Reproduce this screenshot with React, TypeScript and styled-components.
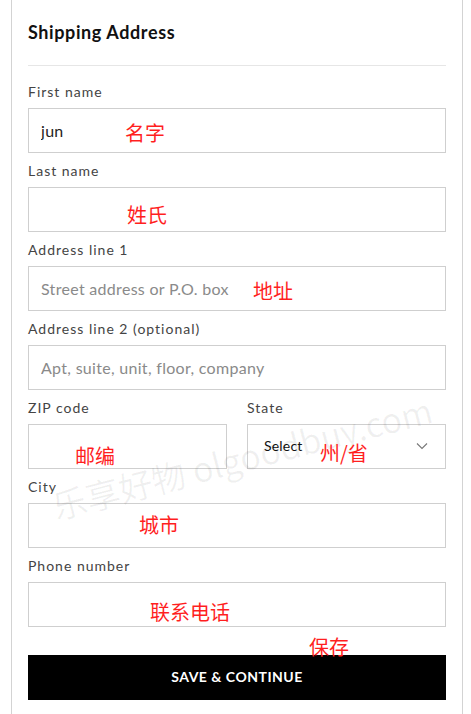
import * as React from 'react';
import styled, { createGlobalStyle } from 'styled-components';

const GlobalStyle = createGlobalStyle`
  html, body {
    margin: 0;
    padding: 0;
    background: #fff;
  }
  body {
    font-family: Lato, "Open Sans", "Noto Sans CJK SC", sans-serif;
    color: #222;
  }
`;

const Panel = styled.div`
  position: relative;
  width: 452px;
  margin-left: 11px;
  min-height: 714px;
  box-sizing: border-box;
  border-left: 1px solid #d3d3d3;
  border-right: 1px solid #d3d3d3;
  padding: 0 16px;
`;

const Header = styled.div`
  padding: 20px 0 21px;
  border-bottom: 1px solid #e6e6e6;
  font-size: 18px;
  line-height: 24px;
  font-weight: 700;
  letter-spacing: 0.6px;
  color: #111;
`;

const Form = styled.form`
  display: flex;
  flex-direction: column;
  padding-top: 18px;
`;

const Row = styled.div`
  display: grid;
  grid-template-columns: 1fr 1fr;
  column-gap: 20px;
`;

const Field = styled.div`
  display: flex;
  flex-direction: column;
  margin-bottom: 10px;
`;

const Label = styled.label`
  font-size: 14px;
  line-height: 16px;
  letter-spacing: 1px;
  color: #444;
  margin-bottom: 8px;
`;

const Input = styled.input`
  box-sizing: border-box;
  height: 45px;
  width: 100%;
  border: 1px solid #cfcfcf;
  padding: 0 12px;
  font-family: Lato, "Open Sans", sans-serif;
  font-size: 16px;
  letter-spacing: 0.3px;
  color: #222;
  outline: none;
  &::placeholder {
    color: #8a8a8a;
  }
`;

const SelectBox = styled.div`
  box-sizing: border-box;
  height: 45px;
  border: 1px solid #cfcfcf;
  display: flex;
  align-items: center;
  justify-content: space-between;
  padding: 0 17px 2px 16px;
  font-size: 14px;
  letter-spacing: 0.2px;
  color: #111;
`;

const SaveButton = styled.button`
  margin-top: 18px;
  height: 45px;
  padding: 0 0 3px;
  border: none;
  background: #000;
  color: #fff;
  font-family: Lato, "Open Sans", sans-serif;
  font-size: 14px;
  font-weight: 700;
  letter-spacing: 0.5px;
  cursor: pointer;
`;

const Note = styled.span<{ $x: number; $y: number }>`
  position: absolute;
  left: ${p => p.$x - 12}px;
  top: ${p => p.$y}px;
  font-family: "Noto Sans CJK SC", sans-serif;
  font-size: 20px;
  line-height: 20px;
  color: #ff1f1f;
  pointer-events: none;
  white-space: nowrap;
`;

const Watermark = styled.div`
  position: absolute;
  left: 230px;
  top: 457px;
  transform: translate(-50%, -50%) rotate(-14.5deg);
  font-family: "Noto Sans CJK SC", "Open Sans", sans-serif;
  font-size: 34px;
  color: rgba(0, 0, 0, 0.06);
  white-space: nowrap;
  pointer-events: none;
`;

const Chevron = () => (
  <svg width="12" height="8" viewBox="0 0 12 8" fill="none">
    <path d="M1 1.5 L6 6.5 L11 1.5" stroke="#777" strokeWidth="1.1" />
  </svg>
);

const notes: { text: string; x: number; y: number }[] = [
  { text: '名字', x: 125, y: 123 },
  { text: '姓氏', x: 127, y: 205 },
  { text: '地址', x: 253, y: 281 },
  { text: '邮编', x: 75, y: 446 },
  { text: '州/省', x: 320, y: 443 },
  { text: '城市', x: 139, y: 515 },
  { text: '联系电话', x: 150, y: 602 },
  { text: '保存', x: 309, y: 637 },
];

export default function App() {
  return (
    <>
      <GlobalStyle />
      <Panel>
        <Header>Shipping Address</Header>
        <Form onSubmit={e => e.preventDefault()}>
          <Field>
            <Label>First name</Label>
            <Input defaultValue="jun" />
          </Field>
          <Field>
            <Label>Last name</Label>
            <Input />
          </Field>
          <Field>
            <Label>Address line 1</Label>
            <Input placeholder="Street address or P.O. box" />
          </Field>
          <Field>
            <Label>Address line 2 (optional)</Label>
            <Input placeholder="Apt, suite, unit, floor, company" />
          </Field>
          <Row>
            <Field>
              <Label>ZIP code</Label>
              <Input />
            </Field>
            <Field>
              <Label>State</Label>
              <SelectBox>
                <span>Select</span>
                <Chevron />
              </SelectBox>
            </Field>
          </Row>
          <Field>
            <Label>City</Label>
            <Input />
          </Field>
          <Field>
            <Label>Phone number</Label>
            <Input />
          </Field>
          <SaveButton type="submit">SAVE &amp; CONTINUE</SaveButton>
        </Form>
        <Watermark>乐享好物 olgoodbuy.com</Watermark>
        {notes.map(n => (
          <Note key={n.text} $x={n.x} $y={n.y}>
            {n.text}
          </Note>
        ))}
      </Panel>
    </>
  );
}
